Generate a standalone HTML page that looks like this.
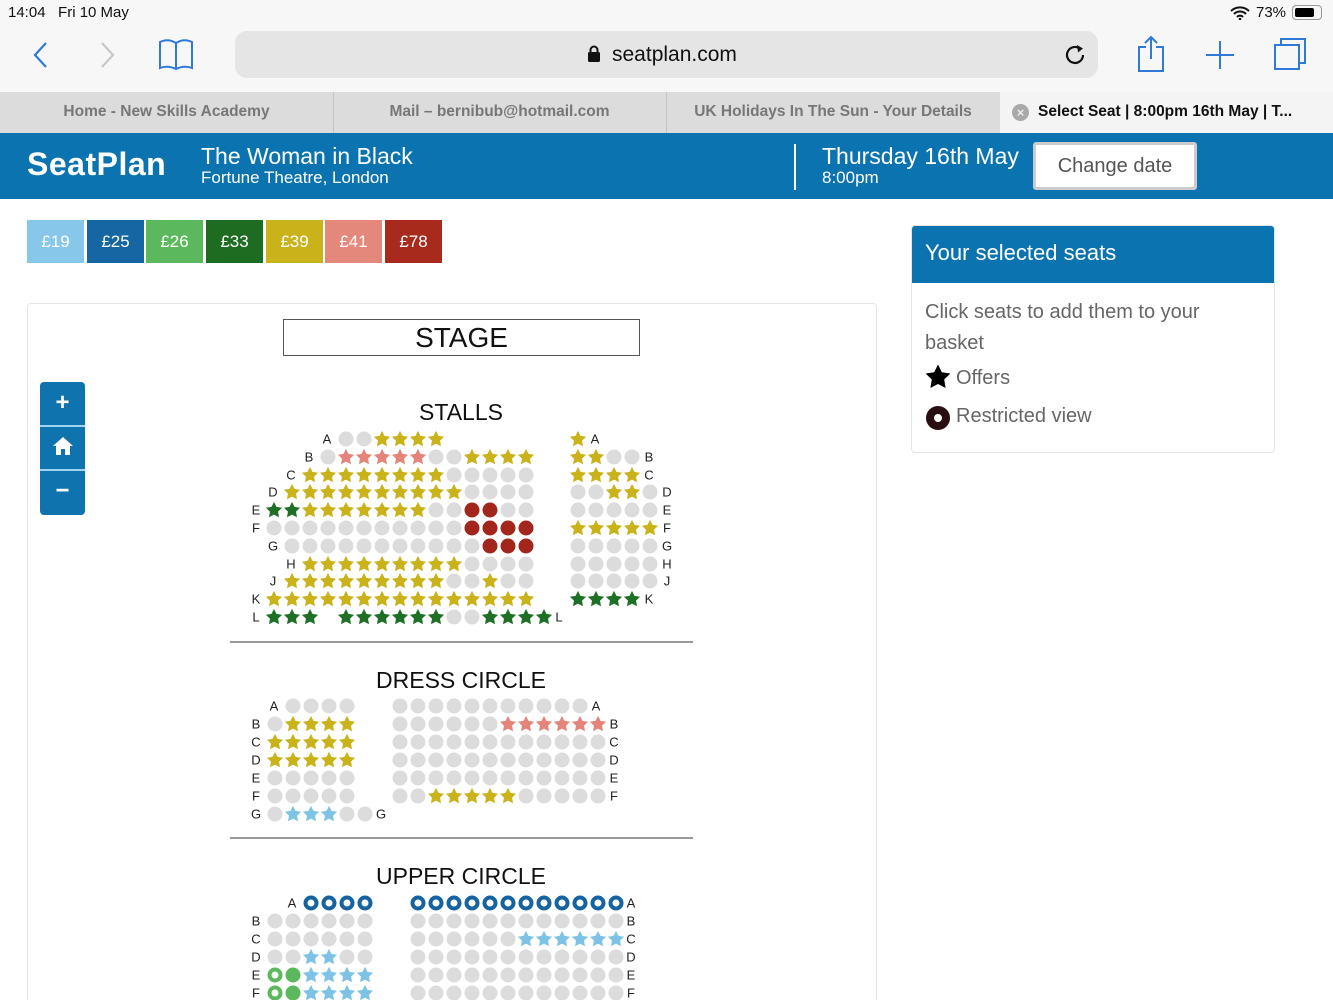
<!DOCTYPE html>
<html><head><meta charset="utf-8">
<style>
*{box-sizing:border-box;margin:0;padding:0}
html,body{width:1333px;height:1000px;overflow:hidden}
body{background:#fff;font-family:"Liberation Sans",sans-serif;position:relative}
.a{position:absolute}
.lbl{position:absolute;font-size:13px;color:#222;transform:translate(-50%,-50%);line-height:1}
.s{position:absolute;width:17px;height:17px;transform:translate(-50%,-50%)}
.c{border-radius:50%;width:15px;height:15px}
.st{clip-path:polygon(50% 2%,64.7% 31.8%,97.6% 36.5%,73.8% 59.7%,79.4% 92.5%,50% 77%,20.6% 92.5%,26.2% 59.7%,2.4% 36.5%,35.3% 31.8%)}
.ring{border-radius:50%;width:15px;height:15px;border:4.5px solid #1563a0;background:#fff}
.wring{border-radius:50%;width:15px;height:15px;border:4.5px solid #5cb85c;background:#fff}
.price{position:absolute;top:220px;height:43px;width:57px;color:#fff;font-size:17px;text-align:center;line-height:43px}
.sec{position:absolute;font-size:23px;color:#111;transform:translateX(-50%);white-space:nowrap}
</style></head><body>
<div class="a" style="left:0;top:0;width:1333px;height:92px;background:#f7f7f7"></div>
<div class="a" style="left:8px;top:4px;font-size:15px;color:#111">14:04&nbsp;&nbsp;&nbsp;Fri 10 May</div>
<div class="a" style="left:1256px;top:4px;font-size:15px;color:#111">73%</div>
<svg class="a" style="left:1230px;top:6px" width="20" height="14" viewBox="0 0 20 14"><path d="M1 5a13 13 0 0 1 18 0M4 8a8.5 8.5 0 0 1 12 0M7 11a4 4 0 0 1 6 0" stroke="#111" stroke-width="2" fill="none"/><circle cx="10" cy="13" r="1.3" fill="#111"/></svg>
<div class="a" style="left:1292px;top:5px;width:30px;height:15px;border:1.5px solid #999;border-radius:4px"><div style="margin:1.5px;width:19px;height:9px;background:#000;border-radius:2px"></div></div>
<svg class="a" style="left:30px;top:40px" width="20" height="30"><path d="M16 3L5 15l11 12" stroke="#2f7ad6" stroke-width="2.2" fill="none"/></svg>
<svg class="a" style="left:98px;top:40px" width="20" height="30"><path d="M4 3l11 12L4 27" stroke="#c8c8c8" stroke-width="2.2" fill="none"/></svg>
<svg class="a" style="left:158px;top:38px" width="36" height="34"><path d="M2 4q8-4 16 1q8-5 16-1v26q-8-3-16 1q-8-4-16-1z M18 5v26" stroke="#2f7ad6" stroke-width="2" fill="none"/></svg>
<div class="a" style="left:235px;top:31px;width:863px;height:47px;background:#e5e5e6;border-radius:12px"></div>
<svg class="a" style="left:587px;top:45px" width="14" height="18"><rect x="1" y="7" width="12" height="10" rx="1.5" fill="#111"/><path d="M3.5 7V5a3.5 3.5 0 0 1 7 0v2" stroke="#111" stroke-width="2" fill="none"/></svg>
<div class="a" style="left:612px;top:43px;font-size:21px;color:#111">seatplan.com</div>
<svg class="a" style="left:1064px;top:42px" width="24" height="26"><path d="M19 13a8 8 0 1 1-3-6.3" stroke="#111" stroke-width="2.2" fill="none"/><path d="M13 3l6 3.5-5 4z" fill="#111"/></svg>
<svg class="a" style="left:1136px;top:35px" width="30" height="38"><path d="M10 12H3v24h24V12h-7M15 2v22M9 8l6-6 6 6" stroke="#2f7ad6" stroke-width="2" fill="none"/></svg>
<svg class="a" style="left:1204px;top:39px" width="32" height="32"><path d="M16 2v28M2 16h28" stroke="#2f7ad6" stroke-width="2" fill="none"/></svg>
<svg class="a" style="left:1273px;top:37px" width="36" height="36"><rect x="2" y="8" width="24" height="24" stroke="#2f7ad6" stroke-width="2" fill="none"/><path d="M8 8V2h24v24h-6" stroke="#2f7ad6" stroke-width="2" fill="none"/></svg>
<div class="a" style="left:0;top:92px;width:1333px;height:41px;background:#dcdcdc"></div>
<div class="a" style="left:1000px;top:92px;width:333px;height:41px;background:#f4f4f4"></div>
<div class="a" style="left:333px;top:92px;width:1px;height:41px;background:#c4c4c4"></div>
<div class="a" style="left:666px;top:92px;width:1px;height:41px;background:#c4c4c4"></div>
<div class="a" style="left:0;top:103px;width:333px;text-align:center;font-size:15.5px;font-weight:bold;color:#777">Home - New Skills Academy</div>
<div class="a" style="left:333px;top:103px;width:333px;text-align:center;font-size:15.5px;font-weight:bold;color:#777">Mail – bernibub@hotmail.com</div>
<div class="a" style="left:666px;top:103px;width:334px;text-align:center;font-size:15.5px;font-weight:bold;color:#777">UK Holidays In The Sun - Your Details</div>
<div class="a" style="left:1012px;top:104px;width:17px;height:17px;border-radius:50%;background:#a9a9a9;color:#eee;font-size:13px;text-align:center;line-height:17px;font-weight:bold">×</div>
<div class="a" style="left:1038px;top:103px;font-size:15.5px;font-weight:bold;color:#111">Select Seat | 8:00pm 16th May | T...</div>
<div class="a" style="left:0;top:133px;width:1333px;height:66px;background:#0b74b0"></div>
<div class="a" style="left:27px;top:146px;font-size:32px;font-weight:bold;color:#fff;letter-spacing:0.5px">SeatPlan</div>
<div class="a" style="left:201px;top:143px;font-size:23px;color:#fff">The Woman in Black</div>
<div class="a" style="left:201px;top:168px;font-size:17px;color:#fff">Fortune Theatre, London</div>
<div class="a" style="left:794px;top:144px;width:2px;height:46px;background:#fff"></div>
<div class="a" style="left:822px;top:143px;font-size:23px;color:#fff">Thursday 16th May</div>
<div class="a" style="left:822px;top:168px;font-size:17px;color:#fff">8:00pm</div>
<div class="a" style="left:1033px;top:142px;width:164px;height:48px;background:#fff;border:3px solid #ccc;border-radius:3px;font-size:20px;color:#555;text-align:center;line-height:42px">Change date</div>
<div class="price" style="left:27px;background:#87c7ea">£19</div>
<div class="price" style="left:87px;background:#1566a3">£25</div>
<div class="price" style="left:146px;background:#5cb85c">£26</div>
<div class="price" style="left:206px;background:#1e6b22">£33</div>
<div class="price" style="left:266px;background:#c9b21a">£39</div>
<div class="price" style="left:325px;background:#e4887b">£41</div>
<div class="price" style="left:385px;background:#a72a1d">£78</div>
<div class="a" style="left:27px;top:303px;width:850px;height:697px;border:1px solid #e6e6e6;border-bottom:none;border-radius:4px 4px 0 0"></div>
<div class="a" style="left:283px;top:319px;width:357px;height:37px;border:1.5px solid #555;font-size:28px;text-align:center;line-height:36px;color:#111">STAGE</div>
<div class="a" style="left:40px;top:382px;width:45px;height:133px;background:#0f73ad;border-radius:4px"></div>
<div class="a" style="left:40px;top:425px;width:45px;height:2px;background:#9fd4f2"></div>
<div class="a" style="left:40px;top:469px;width:45px;height:2px;background:#9fd4f2"></div>
<div class="a" style="left:40px;top:389px;width:45px;text-align:center;color:#fff;font-size:24px;font-weight:bold">+</div>
<svg class="a" style="left:52px;top:436px" width="22" height="20"><path d="M11 1L1 10h3v9h5v-6h4v6h5v-9h3z" fill="#fff"/></svg>
<div class="a" style="left:40px;top:477px;width:45px;text-align:center;color:#fff;font-size:24px;font-weight:bold">−</div>
<div class="sec" style="left:461px;top:399px">STALLS</div>
<div class="sec" style="left:461px;top:667px">DRESS CIRCLE</div>
<div class="sec" style="left:461px;top:863px">UPPER CIRCLE</div>
<div class="a" style="left:230px;top:641px;width:463px;height:2px;background:#999"></div>
<div class="a" style="left:230px;top:837px;width:463px;height:2px;background:#999"></div>
<div class="lbl" style="left:327px;top:439px">A</div><div class="lbl" style="left:309px;top:457px">B</div><div class="lbl" style="left:291px;top:475px">C</div><div class="lbl" style="left:273px;top:492px">D</div><div class="lbl" style="left:256px;top:510px">E</div><div class="lbl" style="left:256px;top:528px">F</div><div class="lbl" style="left:273px;top:546px">G</div><div class="lbl" style="left:291px;top:564px">H</div><div class="lbl" style="left:273px;top:581px">J</div><div class="lbl" style="left:256px;top:599px">K</div><div class="lbl" style="left:256px;top:617px">L</div><div class="lbl" style="left:559px;top:617px">L</div>
<div class="lbl" style="left:595px;top:439px">A</div><div class="lbl" style="left:649px;top:457px">B</div><div class="lbl" style="left:649px;top:475px">C</div><div class="lbl" style="left:667px;top:492px">D</div><div class="lbl" style="left:667px;top:510px">E</div><div class="lbl" style="left:667px;top:528px">F</div><div class="lbl" style="left:667px;top:546px">G</div><div class="lbl" style="left:667px;top:564px">H</div><div class="lbl" style="left:667px;top:581px">J</div><div class="lbl" style="left:649px;top:599px">K</div>
<div class="lbl" style="left:274px;top:706px">A</div><div class="lbl" style="left:256px;top:724px">B</div><div class="lbl" style="left:256px;top:742px">C</div><div class="lbl" style="left:256px;top:760px">D</div><div class="lbl" style="left:256px;top:778px">E</div><div class="lbl" style="left:256px;top:796px">F</div><div class="lbl" style="left:256px;top:814px">G</div><div class="lbl" style="left:381px;top:814px">G</div>
<div class="lbl" style="left:596px;top:706px">A</div><div class="lbl" style="left:614px;top:724px">B</div><div class="lbl" style="left:614px;top:742px">C</div><div class="lbl" style="left:614px;top:760px">D</div><div class="lbl" style="left:614px;top:778px">E</div><div class="lbl" style="left:614px;top:796px">F</div>
<div class="lbl" style="left:292px;top:903px">A</div><div class="lbl" style="left:256px;top:921px">B</div><div class="lbl" style="left:256px;top:939px">C</div><div class="lbl" style="left:256px;top:957px">D</div><div class="lbl" style="left:256px;top:975px">E</div><div class="lbl" style="left:256px;top:993px">F</div>
<div class="lbl" style="left:631px;top:903px">A</div><div class="lbl" style="left:631px;top:921px">B</div><div class="lbl" style="left:631px;top:939px">C</div><div class="lbl" style="left:631px;top:957px">D</div><div class="lbl" style="left:631px;top:975px">E</div><div class="lbl" style="left:631px;top:993px">F</div>
<div id="seats"></div>
<div class="a" style="left:911px;top:225px;width:364px;height:228px;border:1px solid #e3e3e3;border-radius:4px;overflow:hidden">
<div style="height:57px;background:#0b74b0;color:#fff;font-size:22px;padding:14px 0 0 13px">Your selected seats</div>
<div style="padding:14px 13px;font-size:20px;color:#666;line-height:31px">Click seats to add them to your basket</div>
</div>
<div class="a st" style="left:925px;top:364px;width:26px;height:26px;background:#000"></div>
<div class="a" style="left:956px;top:367px;font-size:20px;color:#666">Offers</div>
<div class="a" style="left:926px;top:406px;width:24px;height:24px;border-radius:50%;border:8px solid #2a0f12;background:#fff"></div>
<div class="a" style="left:956px;top:405px;font-size:20px;color:#666">Restricted view</div>
<script>
var C={o:['c','#dcdcdc'],y:['st','#c9b21a'],p:['st','#e5847a'],g:['st','#1e7026'],R:['c','#a3261d'],b:['st','#7ec3e6'],D:['ring',''],W:['wring',''],G:['c','#5cb85c']};
var h='';
function blk(x0,ys,rows){rows.forEach(function(r,j){for(var i=0;i<r.length;i++){var k=r[i];if(!C[k])continue;var t=C[k];h+='<div class="s '+t[0]+'" style="left:'+(x0+18*i)+'px;top:'+ys[j]+'px;'+(t[1]?'background:'+t[1]:'')+'"></div>';}});}
var sy=[439,457,475,492,510,528,546,564,581,599,617];
blk(274,sy,["....ooyyyy","...opppppooyyyy","..yyyyyyyyooooo",".yyyyyyyyyyoooo","ggyyyyyyyooRRoo","oooooooooooRRRR",".oooooooooooRRR","..yyyyyyyyyoooo",".yyyyyyyyyooyoo","yyyyyyyyyyyyyyy","ggg.ggggggoogggg"]);
blk(578,sy.slice(0,10),["y","yyoo","yyyy","ooyyo","ooooo","yyyyy","ooooo","ooooo","ooooo","gggg"]);
var dy=[706,724,742,760,778,796,814];
blk(275,dy,[".oooo","oyyyy","yyyyy","yyyyy","ooooo","ooooo","obbboo"]);
blk(400,dy.slice(0,6),["ooooooooooo","oooooopppppp","oooooooooooo","oooooooooooo","oooooooooooo","ooyyyyyooooo"]);
var uy=[903,921,939,957,975,993];
blk(275,uy,["..DDDD","oooooo","oooooo","oobboo","WGbbbb","WGbbbb"]);
blk(418,uy,["DDDDDDDDDDDD","oooooooooooo","oooooobbbbbb","oooooooooooo","oooooooooooo","oooooooooooo"]);
document.getElementById('seats').innerHTML=h;
</script>
</body></html>
